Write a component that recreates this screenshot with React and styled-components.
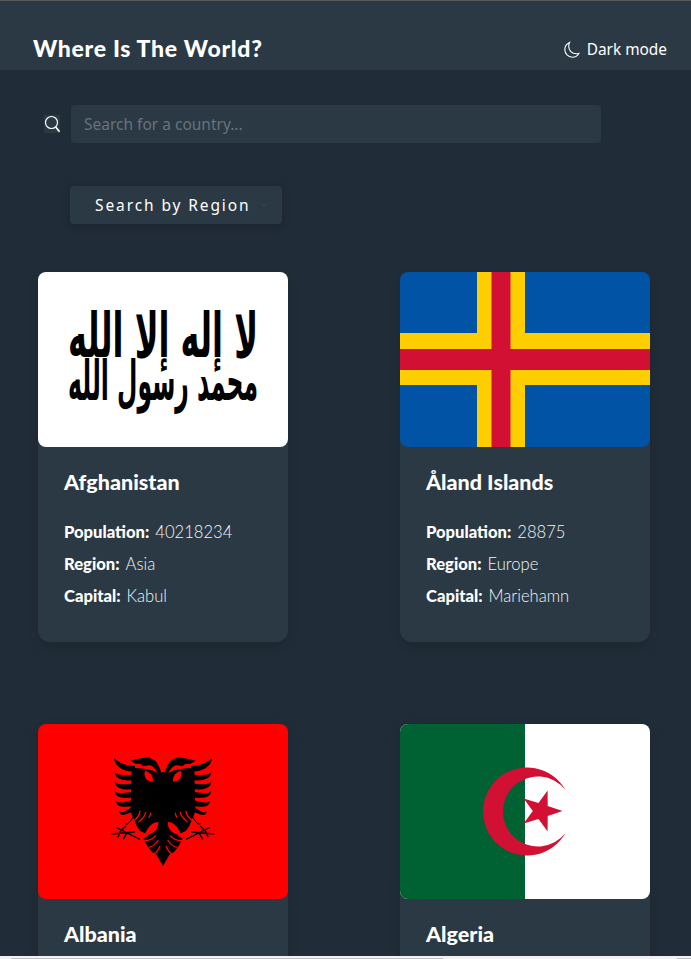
import styled, { createGlobalStyle } from "styled-components";

const GlobalStyle = createGlobalStyle`
  html, body {
    margin: 0;
    padding: 0;
    height: 100%;
    overflow: hidden;
    background-color: #202c37;
  }
  * {
    box-sizing: border-box;
  }
`;

const Page = styled.div`
  height: 100vh;
  display: flex;
  flex-direction: column;
  overflow: hidden;
  background-color: #202c37;
  border-top: 1px solid #555a5e;
  color: #ffffff;
  font-family: "Noto Sans", sans-serif;
`;

const Viewport = styled.div`
  flex: 1;
  min-height: 0;
  overflow: hidden;
`;

const Header = styled.header`
  height: 69px;
  padding: 33px 24px 0 33px;
  display: flex;
  justify-content: space-between;
  align-items: flex-start;
  background-color: #2b3945;
`;

const Title = styled.h1`
  margin: 0;
  font-family: "Lato", sans-serif;
  font-size: 23px;
  line-height: 28px;
  font-weight: 900;
  letter-spacing: 0.7px;
`;

const ThemeToggle = styled.div`
  display: flex;
  align-items: center;
  gap: 6px;
  margin-top: 2px;
  font-size: 15.4px;
  line-height: 28px;
`;

const SearchRow = styled.div`
  margin-top: 35px;
  padding-left: 44px;
  display: flex;
  align-items: center;
  gap: 11px;
`;

const SearchGlyph = styled.svg`
  display: block;
  background-color: #2b3945;
`;

const SearchBox = styled.div`
  width: 530px;
  height: 38px;
  padding-left: 13px;
  display: flex;
  align-items: center;
  border-radius: 4px;
  background-color: #2b3945;
  color: #68727b;
  font-size: 15.5px;
`;

const RegionButton = styled.div`
  width: 212px;
  height: 38px;
  margin: 43px 0 0 70px;
  padding: 0 14px 0 25px;
  display: flex;
  justify-content: space-between;
  align-items: center;
  border-radius: 4px;
  background-color: #2b3945;
  box-shadow: 0 2px 8px rgba(0, 0, 0, 0.2);
  font-size: 15.5px;
  letter-spacing: 1.9px;
`;

const CardGrid = styled.main`
  margin-top: 48px;
  padding: 0 41px 0 38px;
  display: grid;
  grid-template-columns: 250px 250px;
  justify-content: space-between;
  row-gap: 82px;
`;

const Card = styled.article`
  height: 370px;
  border-radius: 12px;
  background-color: #2b3945;
  box-shadow: 0 4px 12px rgba(0, 0, 0, 0.12);
`;

const Flag = styled.svg`
  display: block;
  width: 250px;
  height: 175px;
  border-radius: 8px;
  background-color: ${(props) => props.$bg || "#ffffff"};
`;

const CardBody = styled.div`
  padding: 22px 26px 0;
`;

const Name = styled.h2`
  margin: 0 0 26px;
  font-family: "Lato", sans-serif;
  font-size: 21.5px;
  line-height: 26px;
  font-weight: 900;
`;

const Fact = styled.p`
  margin: 0 0 10px;
  font-family: "Lato", sans-serif;
  font-size: 16.6px;
  line-height: 22px;
  font-weight: 300;
  color: #f0f4f7;
`;

const FactLabel = styled.strong`
  margin-right: 6px;
  font-weight: 900;
  color: #ffffff;
`;

const ScrollTrack = styled.div`
  flex: none;
  height: 3px;
  display: flex;
  justify-content: space-between;
  align-items: flex-end;
  padding-left: 11px;
  background-color: #f1f1f1;
`;

const ScrollThumb = styled.div`
  width: 432px;
  height: 1px;
  background-color: #c1c1c1;
`;

const ScrollCorner = styled.div`
  width: 14px;
  height: 1px;
  background-color: #c1c1c1;
`;

function MoonIcon() {
  return (
    <svg width="18" height="18" viewBox="0 0 18 18" fill="none" stroke="#fff" strokeWidth="1.1">
      <path d="M6.500 1.500C3.400 3 1.800 5.500 1.800 8.600c0 4.200 3.300 7.600 7.500 7.600 2.800 0 5.300-1.500 6.500-3.800-.8.3-1.600.4-2.500.4-4.600 0-7.600-3.500-7.600-7.600 0-1.200.3-2.500.8-3.700z" />
    </svg>
  );
}

function SearchIcon() {
  return (
    <SearchGlyph width="16" height="18" viewBox="0 0 16 18" fill="none" stroke="#fff" strokeWidth="1.2">
      <circle cx="7.500" cy="7.500" r="6" />
      <path d="M11.700 12 15.500 16.800" strokeWidth="1.700" />
    </SearchGlyph>
  );
}

function ChevronIcon() {
  return (
    <svg width="8" height="6" viewBox="0 0 8 6" fill="none" stroke="#36434e" strokeWidth="1.2">
      <path d="M1 1l3 3.500L7 1" />
    </svg>
  );
}

function AfghanistanFlag() {
  return (
    <Flag viewBox="0 0 250 175">
      <g fontFamily="'DejaVu Sans', sans-serif" fontWeight="700" textAnchor="middle" direction="rtl">
        <text transform="translate(125 85) scale(1 1.6)" fontSize="39" textLength="190" lengthAdjust="spacingAndGlyphs">لا إله إلا الله</text>
        <text transform="translate(125 128) scale(1 1.5)" fontSize="37" textLength="190" lengthAdjust="spacingAndGlyphs">محمد رسول الله</text>
      </g>
    </Flag>
  );
}

function AlandFlag() {
  return (
    <Flag viewBox="0 0 250 175" $bg="#0053a5">
      <rect x="77" width="48" height="175" fill="#ffce00" />
      <rect y="61" width="250" height="52" fill="#ffce00" />
      <rect x="91.500" width="19" height="175" fill="#d21034" />
      <rect y="77" width="250" height="21" fill="#d21034" />
    </Flag>
  );
}

const featherTips = [
  [72, 55, 92],
  [74, 97, 118],
  [74, 125, 145],
  [74, 153, 170],
  [78, 183, 195],
  [88, 214, 212],
  [106, 248, 222],
];

function EagleHalf() {
  return (
    <>
      <path d="M219 112C212 90 205 72 196 62L176 52 152 55 121 62 136 71 152 72 160 78 180 76C195 82 205 95 210 125z" />
      <path d="M219 96 204 100 190 92C180 90 160 85 140 84L125 85 122 215 140 258 175 240 219 240z" />
      {featherTips.map(([x, y, end]) => (
        <path key={y} d={`M${x} ${y}C${x + 2} ${y + 22} ${x + 28} ${end + 6} 135 ${end + 2}L135 ${end - 14}C${x + 32} ${end - 14} ${x + 14} ${y + 12} ${x} ${y}z`} />
      ))}
      <path d="M165 92C160 108 168 125 188 125 192 112 183 96 165 92z" fill="#ff0000" />
      <path d="M150 212C150 225 137 238 126 245M167 216C167 230 152 240 145 247M182 218C182 230 172 240 162 248" fill="none" stroke="#ff0000" strokeWidth="4" />
      <path d="M140 258 170 235 219 225 219 378 200 345 185 335 172 318 160 296 176 286 150 272z" />
      <path d="M205 246C188 245 170 264 164 286 186 285 206 270 205 246z" fill="#ff0000" />
      <path d="M160 302C176 303 188 298 198 286M176 322C188 320 198 312 205 300M192 342C199 338 206 330 210 318" fill="none" stroke="#ff0000" strokeWidth="4" />
      <path d="M150 298 78 262M65 282 135 276M92 272 84 292M110 280 100 298M96 268 108 258" fill="none" stroke="#000" strokeWidth="4.500" />
    </>
  );
}

function AlbaniaFlag() {
  return (
    <Flag viewBox="0 0 250 175" $bg="#ff0000">
      <g transform="translate(52 16) scale(.3333)">
        <EagleHalf />
        <g transform="translate(438 0) scale(-1 1)">
          <EagleHalf />
        </g>
      </g>
    </Flag>
  );
}

function AlgeriaFlag() {
  return (
    <Flag viewBox="0 0 250 175" $bg="#ffffff">
      <rect width="125" height="175" fill="#006233" />
      <path d="M164.500 66A44 44 0 1 0 164.500 109A35 35 0 1 1 164.500 66z" transform="translate(1 0)" fill="#d21034" />
      <path d="M162.500 87 147.700 91.900 147.600 107.500 138.500 95 123.600 99.600 132.800 87 123.600 74.400 138.500 79 147.600 66.500 147.700 82.100z" fill="#d21034" />
    </Flag>
  );
}

const countries = [
  { name: "Afghanistan", population: 40218234, region: "Asia", capital: "Kabul", flag: <AfghanistanFlag /> },
  { name: "Åland Islands", population: 28875, region: "Europe", capital: "Mariehamn", flag: <AlandFlag /> },
  { name: "Albania", population: 2837743, region: "Europe", capital: "Tirana", flag: <AlbaniaFlag /> },
  { name: "Algeria", population: 44700000, region: "Africa", capital: "Algiers", flag: <AlgeriaFlag /> },
];

export default function App() {
  return (
    <Page>
      <GlobalStyle />
      <Viewport>
        <Header>
          <Title>Where Is The World?</Title>
          <ThemeToggle>
            <MoonIcon />
            Dark mode
          </ThemeToggle>
        </Header>
        <SearchRow>
          <SearchIcon />
          <SearchBox>Search for a country...</SearchBox>
        </SearchRow>
        <RegionButton>
          Search by Region
          <ChevronIcon />
        </RegionButton>
        <CardGrid>
          {countries.map((country) => (
            <Card key={country.name}>
              {country.flag}
              <CardBody>
                <Name>{country.name}</Name>
                <Fact><FactLabel>Population:</FactLabel>{country.population}</Fact>
                <Fact><FactLabel>Region:</FactLabel>{country.region}</Fact>
                <Fact><FactLabel>Capital:</FactLabel>{country.capital}</Fact>
              </CardBody>
            </Card>
          ))}
        </CardGrid>
      </Viewport>
      <ScrollTrack>
        <ScrollThumb />
        <ScrollCorner />
      </ScrollTrack>
    </Page>
  );
}
